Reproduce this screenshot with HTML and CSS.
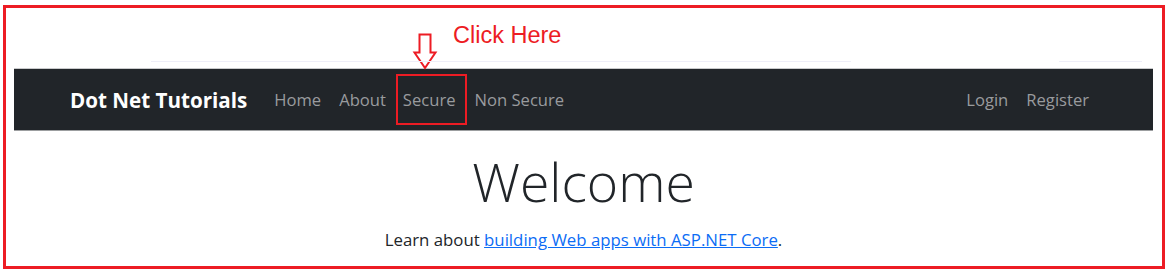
FILE: index.html
```html
<!DOCTYPE html>
<html lang="en">
<head>
  <meta charset="UTF-8" />
  <meta name="viewport" content="width=device-width, initial-scale=1.0"/>
  <title>Dot Net Tutorials</title>
  <link rel="stylesheet" href="styles.css">
</head>
<body>

<div class="frame">
  <!-- annotation over the page -->
  <div class="top-space">
    <span class="hint">Click Here</span>
    <svg class="hint-arrow" width="26" height="38" viewBox="0 0 26 38">
      <path d="M7.5 1.5 H18.5 V19.5 H23.5 L13 35 L2.5 19.5 H7.5 Z" fill="none" stroke="#ed1c24" stroke-width="2" stroke-linejoin="miter"/>
    </svg>
    <div class="ghost-line a"></div>
    <div class="ghost-line b"></div>
  </div>

  <nav class="navbar">
    <div class="nav-inner">
      <a class="brand" href="#">Dot Net Tutorials</a>
      <ul class="nav-links">
        <li><a href="#">Home</a></li>
        <li><a href="#">About</a></li>
        <li><a href="#" class="marked">Secure</a></li>
        <li><a href="#">Non Secure</a></li>
      </ul>
      <ul class="nav-links right">
        <li><a href="#">Login</a></li>
        <li><a href="#">Register</a></li>
      </ul>
    </div>
  </nav>

  <main class="welcome">
    <h1>Welcome</h1>
    <p>Learn about <a href="#">building Web apps with ASP.NET Core</a>.</p>
  </main>
</div>

</body>
</html>
```

FILE: styles.css
```css
*{box-sizing:border-box}

body {
  margin:0;
  background:#fff;
  font-family:'Open Sans','Noto Sans',sans-serif;
  color:#212529;
  padding:5px 3px 0 3px;
}

.frame {
  width:1162px;
  height:264px;
  border:3px solid #ed1c24;
  padding:0 9px 0 8px;
}

.top-space {
  height:60px;
  position:relative;
}

.hint {
  position:absolute;
  left:439px;
  top:14px;
  font-family:'Liberation Sans',Arial,sans-serif;
  font-size:23.5px;
  color:#ed1c24;
}

.hint-arrow {
  position:absolute;
  left:398px;
  top:25px;
}

.ghost-line {
  position:absolute;
  top:53px;
  height:1px;
  background:#eeeef8;
}
.ghost-line.a {left:137px;width:700px}
.ghost-line.b {left:1045px;width:83px}

.navbar {
  background:#212529;
  border-top:1px solid #c9cacc;
  border-bottom:1px solid #9c9ea0;
  height:63px;
}

.nav-inner {
  display:flex;
  align-items:center;
  height:100%;
  padding:0 55px 0 56px;
}

.brand {
  color:#fff;
  font-weight:700;
  font-size:20.6px;
  text-decoration:none;
  margin-right:18px;
}

.nav-links {
  display:flex;
  align-items:center;
  list-style:none;
  margin:0;
  padding:0;
}

.nav-links.right {margin-left:auto}

.nav-links a {
  display:block;
  color:#999b9e;
  text-decoration:none;
  font-size:16.6px;
  padding:8px 9px;
}

.nav-links a.marked {
  border:2px solid #ed1c24;
  padding:12px 9px 12px 5px;
  margin:0 -1px 0 1px;
}

.welcome {
  text-align:center;
  padding-top:19px;
}

.welcome h1 {
  font-weight:300;
  font-size:53.5px;
  line-height:1.2;
  margin:0 0 14px;
}

.welcome p {
  margin:0;
  font-size:16.8px;
}

.welcome p a {
  color:#0b6cf5;
}
```
